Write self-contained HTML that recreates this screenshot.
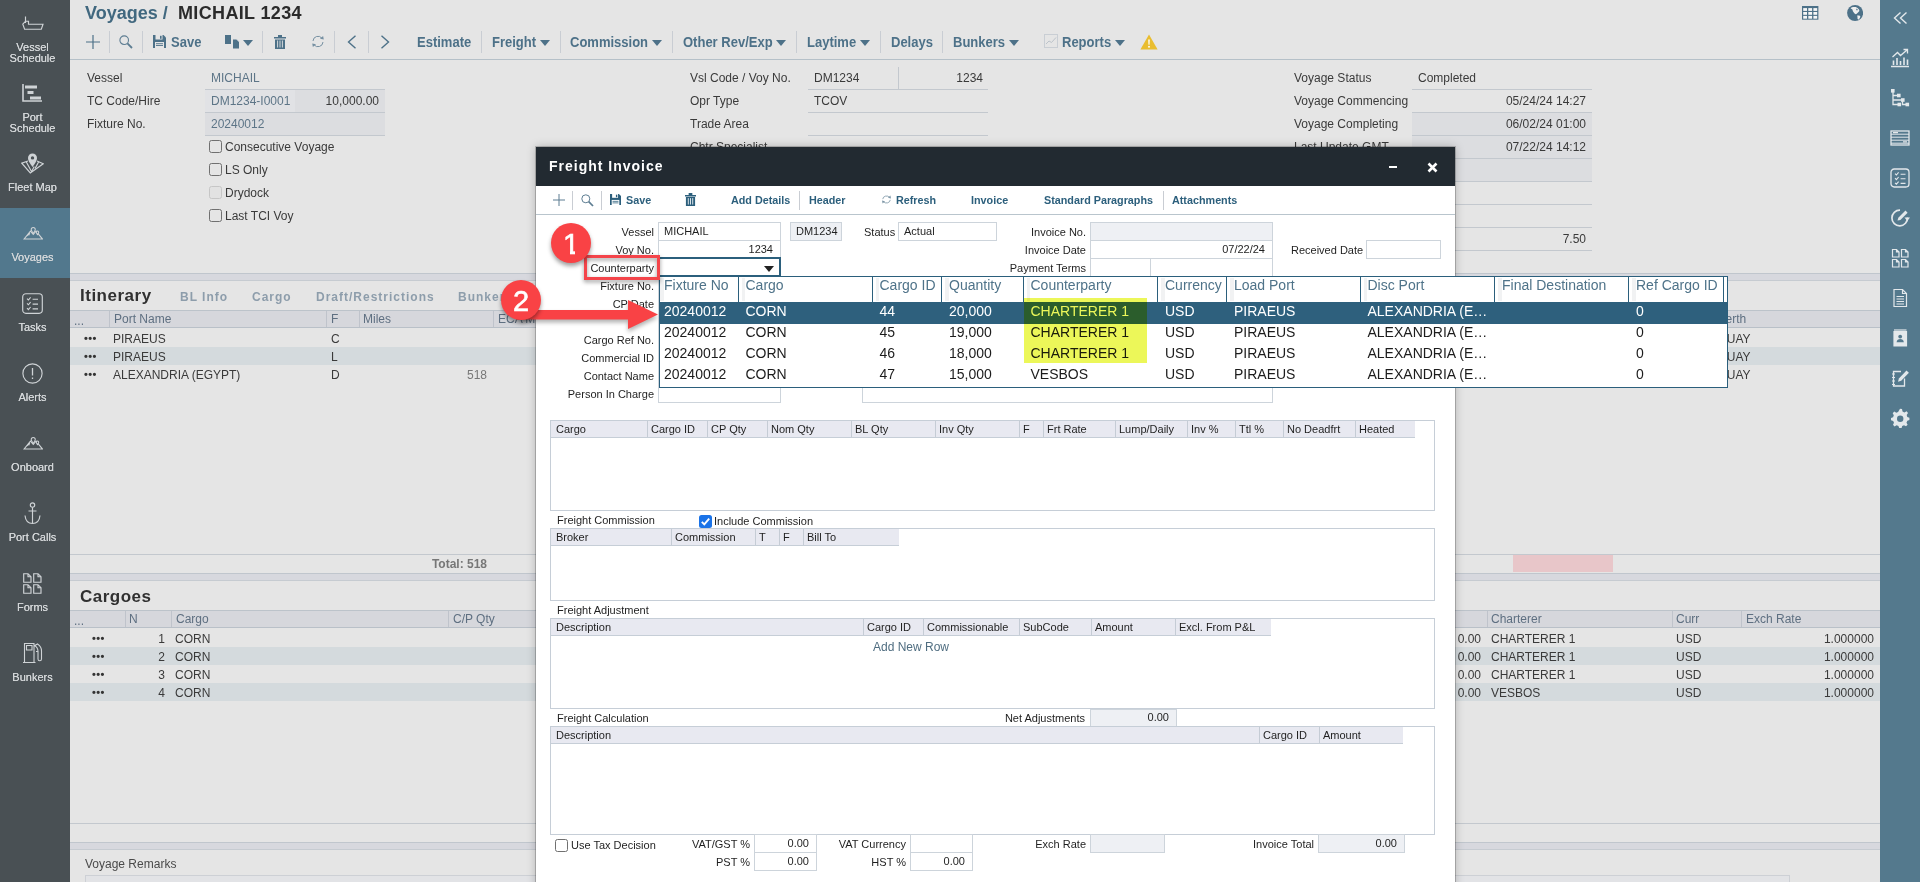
<!DOCTYPE html>
<html lang="en">
<head>
<meta charset="utf-8">
<title>Voyages / MICHAIL 1234</title>
<style>
*{box-sizing:border-box;margin:0;padding:0}
html,body{width:1920px;height:882px;overflow:hidden;background:#e5e5e5;font-family:"Liberation Sans",Arial,sans-serif;font-size:12px;color:#333}
.abs,.abs *{position:absolute}
#page{position:relative;width:1920px;height:882px;overflow:hidden;background:#e5e5e5}
.t{position:absolute;white-space:nowrap;line-height:1}
/* left nav */
#lnav{position:absolute;left:0;top:0;width:70px;height:882px;background:#495054}
#lnav .act{position:absolute;left:0;top:208px;width:70px;height:70px;background:#52788d}
#lnav .lb{position:absolute;left:0;width:65px;text-align:center;color:#d4d7d9;font-size:11px;line-height:11px;white-space:nowrap;text-shadow:0 0 0.5px #d4d7d9}
#lnav svg{position:absolute;fill:none;stroke:#cfd3d6;stroke-width:1.15}
/* right bar */
#rbar{position:absolute;left:1880px;top:0;width:40px;height:882px;background:#54798d}
#rbar svg{position:absolute;left:10px;width:20px;height:20px;fill:none;stroke:#e3e8eb;stroke-width:1.5}
/* header */
.ttl{font-size:18px;font-weight:bold}
.tb{font-size:14px;font-weight:bold;color:#4d7188;transform:scaleX(.9286);transform-origin:0 0}
.sep{position:absolute;width:1px;background:#c9cdd3}
.hl{position:absolute;height:1px;background:#c3c8ce}
.lab{font-size:12px;color:#3a3a3a}
.val{font-size:12px;color:#3a3a3a}
.fld{position:absolute;background:#dcdde0}
.cb{position:absolute;width:13px;height:13px;border:1px solid #707070;border-radius:2.5px;background:transparent}
.caret{position:absolute;width:0;height:0;border-left:5px solid transparent;border-right:5px solid transparent;border-top:6px solid #4d7188}
/* grids in bg */
.gh{position:absolute;background:#d6d7dc;border-top:1px solid #bcc3ca;border-bottom:1px solid #b9c0c8}
.gh .t{color:#5e6f81;font-size:12px;top:2px}
.gh .sep{top:0;height:16px;background:#bfc3cb}
.row2{position:absolute;background:#d4dadd}
.band{position:absolute;background:#d7d8de;border-top:1px solid #c0c6cd;border-bottom:1px solid #c6cbd1}
.sec{font-size:17px;font-weight:bold;letter-spacing:.5px;color:#303030}
.tab{font-size:13px;font-weight:bold;letter-spacing:1.08px;color:#8d9dab;transform:scaleX(.923);transform-origin:0 0}
.dots{font-size:11px;font-weight:bold;letter-spacing:.4px;color:#333}

/* dialog */
.dbox{position:absolute;left:536px;top:147px;width:919px;height:760px;background:#fff;box-shadow:0 0 0 1px rgba(0,0,0,.2),0 0 9px rgba(0,0,0,.25)}
.dtitle{position:absolute;left:536px;top:147px;width:919px;height:39px;background:#222a31}
.dtt{font-size:15px;font-weight:bold;letter-spacing:1.07px;color:#fff;transform:scaleX(.9333);transform-origin:0 0}
.dtb{font-size:11px;font-weight:bold;color:#2c5f7c;transform:scaleX(.98);transform-origin:0 0}
.dl{font-size:11px;color:#1f1f1f}
.df{position:absolute;border:1px solid #cdd4db;background:#fff}
.dg{position:absolute;border:1px solid #c6ced7;background:#fff}
.dgh{position:absolute;background:#e8e9f1;border-bottom:1px solid #c6ced7}
#dd{position:absolute;border:1px solid #2b5f7c;background:#fff}
.ddh{font-size:14px;color:#4f7389}
.ddr{font-size:14px;color:#1c1c1c}
.ddr.w{color:#fff}
.ddsel{position:absolute;background:#2e607d}
.ddsep{position:absolute;width:1px;height:25px;background:#2b5f7c}
.bdg i{position:absolute;top:26.6px;height:6px;background:#f94245}
.bdg{position:absolute;width:40px;height:40px;border-radius:50%;background:#f94245;color:#fff;font-size:29px;line-height:42px;text-align:center;-webkit-text-stroke:.6px #fff;box-shadow:0 3px 4px rgba(0,0,0,.38)}
</style>
</head>
<body>
<div id="page">

<!-- ================= MAIN BACKGROUND CONTENT ================= -->
<div id="main">
<!-- title -->
<div class="t ttl" style="left:85px;top:4px;color:#41687f">Voyages /</div>
<div class="t ttl" style="left:178px;top:4px;color:#2b2b2b;letter-spacing:.35px">MICHAIL 1234</div>
<!-- top right icons -->
<svg style="position:absolute;left:1802.3px;top:6px" width="16.4" height="13.7" viewBox="0 0 16.4 13.7"><rect width="16.4" height="13.7" fill="#4d7188"/><g fill="#f6f6f6"><rect x="1.2" y="2.1" width="3.8" height="2.8"/><rect x="1.2" y="6.0" width="3.8" height="2.8"/><rect x="1.2" y="9.9" width="3.8" height="2.8"/><rect x="6.3" y="2.1" width="3.8" height="2.8"/><rect x="6.3" y="6.0" width="3.8" height="2.8"/><rect x="6.3" y="9.9" width="3.8" height="2.8"/><rect x="11.4" y="2.1" width="3.8" height="2.8"/><rect x="11.4" y="6.0" width="3.8" height="2.8"/><rect x="11.4" y="9.9" width="3.8" height="2.8"/></g></svg>
<svg style="position:absolute;left:1847px;top:4.9px" width="16.2" height="16" viewBox="0 0 16.2 16"><circle cx="8.1" cy="8" r="8" fill="#4d7188"/><path d="M3.6 3.2L5.4 4.5L5.9 6.3L7.3 8.2L8.7 9.2L9.7 8.7L11 7.4L12.4 5.9L12 4.5L10.5 3L8.7 2L5.9 2L4 2.7Z M10.1 10.5L12.4 10.5L13.4 11.5L12.9 13L11.5 14.8L10.5 13.8L10.5 12Z" fill="#efefef"/><path d="M9.5 3.6L10.8 4.6L10.2 5.6L9.2 5Z" fill="#4d7188"/></svg>
<!-- toolbar -->
<svg style="position:absolute;left:86px;top:35px" width="14" height="14" viewBox="0 0 14 14"><path d="M7 0V14M0 7H14" stroke="#4d7188" stroke-width="1.2"/></svg>
<div class="sep" style="left:109px;top:31px;height:22px"></div>
<svg style="position:absolute;left:119px;top:35px" width="14" height="14" viewBox="0 0 14 14"><circle cx="5.2" cy="5.2" r="4.3" fill="none" stroke="#5d7d92" stroke-width="1.1"/><path d="M8.4 8.4L13 13" stroke="#5d7d92" stroke-width="1.8"/></svg>
<div class="sep" style="left:142px;top:31px;height:22px"></div>
<svg style="position:absolute;left:153px;top:35px" width="13" height="13" viewBox="0 0 13 13"><path d="M0 0H10.5L13 2.5V13H0Z" fill="#4d7188"/><rect x="2.5" y="0" width="7" height="4.5" fill="#e5e5e5"/><rect x="7" y=".8" width="1.6" height="3" fill="#4d7188"/><rect x="2" y="7" width="9" height="6" fill="#e5e5e5"/><path d="M3 8.7H10M3 10.5H10" stroke="#4d7188" stroke-width=".9"/></svg>
<div class="t tb" style="left:171px;top:35px">Save</div>
<svg style="position:absolute;left:225px;top:34px" width="15" height="15" viewBox="0 0 15 15"><path d="M0 1H6V10H0Z" fill="#4d7188"/><path d="M7.5 5H11.5L14.5 8V15H7.5Z" fill="#4d7188" stroke="#e5e5e5" stroke-width="1"/></svg>
<div class="caret" style="left:243px;top:40px"></div>
<div class="sep" style="left:262px;top:31px;height:22px"></div>
<svg style="position:absolute;left:274px;top:35px" width="12" height="14" viewBox="0 0 12 14"><path d="M0 2H12V3.6H0ZM4 0H8V2H4ZM1 4.4H11V14H1Z" fill="#4d7188"/><path d="M3.6 5.5V12.5M6 5.5V12.5M8.4 5.5V12.5" stroke="#e5e5e5" stroke-width=".9"/></svg>
<svg style="position:absolute;left:311px;top:35px" width="14" height="13" viewBox="0 0 14 13"><path d="M2 6A5 5 0 0 1 11 3.3M12 7A5 5 0 0 1 3 9.7" fill="none" stroke="#7690a2" stroke-width="1"/><path d="M9 3.8L12.8 4.6L12.1 .9ZM5 9.2L1.2 8.4L1.9 12.1Z" fill="#7690a2"/></svg>
<div class="sep" style="left:334px;top:31px;height:22px"></div>
<svg style="position:absolute;left:347px;top:35px" width="10" height="14" viewBox="0 0 10 14"><path d="M8.5 .8L1.5 7L8.5 13.2" fill="none" stroke="#4d7188" stroke-width="1.4"/></svg>
<div class="sep" style="left:368px;top:31px;height:22px"></div>
<svg style="position:absolute;left:380px;top:35px" width="10" height="14" viewBox="0 0 10 14"><path d="M1.5 .8L8.5 7L1.5 13.2" fill="none" stroke="#4d7188" stroke-width="1.4"/></svg>
<div class="t tb" style="left:417px;top:35px">Estimate</div>
<div class="sep" style="left:481px;top:31px;height:22px"></div>
<div class="t tb" style="left:492px;top:35px">Freight</div><div class="caret" style="left:540px;top:40px"></div>
<div class="sep" style="left:560px;top:31px;height:22px"></div>
<div class="t tb" style="left:570px;top:35px">Commission</div><div class="caret" style="left:652px;top:40px"></div>
<div class="sep" style="left:672px;top:31px;height:22px"></div>
<div class="t tb" style="left:683px;top:35px">Other Rev/Exp</div><div class="caret" style="left:776px;top:40px"></div>
<div class="sep" style="left:796px;top:31px;height:22px"></div>
<div class="t tb" style="left:807px;top:35px">Laytime</div><div class="caret" style="left:860px;top:40px"></div>
<div class="sep" style="left:880px;top:31px;height:22px"></div>
<div class="t tb" style="left:891px;top:35px">Delays</div>
<div class="sep" style="left:942px;top:31px;height:22px"></div>
<div class="t tb" style="left:953px;top:35px">Bunkers</div><div class="caret" style="left:1009px;top:40px"></div>
<svg style="position:absolute;left:1044px;top:34px" width="14" height="14" viewBox="0 0 14 14"><rect x=".5" y=".5" width="13" height="13" fill="none" stroke="#c9ced4"/><path d="M2 10L5 7L7.5 8.5L12 3.5" fill="none" stroke="#bcc3ca" stroke-width="1"/></svg>
<div class="t tb" style="left:1062px;top:35px">Reports</div><div class="caret" style="left:1115px;top:40px"></div>
<svg style="position:absolute;left:1140px;top:34px" width="18" height="16" viewBox="0 0 18 16"><path d="M9 .6L17.6 15.4H.4Z" fill="#e9bd2f"/><path d="M8.2 5.5H9.8L9.5 10.8H8.5Z" fill="#fff"/><circle cx="9" cy="12.8" r=".95" fill="#fff"/></svg>
<div class="hl" style="left:70px;top:59px;width:1810px;background:#b5c0c8"></div>

<!-- form col 1 -->
<div class="fld" style="left:205px;top:90px;width:90px;height:22px;background:#e1e2e5"></div>
<div class="fld" style="left:295px;top:90px;width:90px;height:22px"></div>
<div class="fld" style="left:205px;top:113px;width:180px;height:22px"></div>
<div class="hl" style="left:205px;top:89px;width:180px"></div>
<div class="hl" style="left:205px;top:112px;width:180px"></div>
<div class="hl" style="left:205px;top:135px;width:180px"></div>
<div class="t lab" style="left:87px;top:72px">Vessel</div>
<div class="t lab" style="left:87px;top:95px">TC Code/Hire</div>
<div class="t lab" style="left:87px;top:118px">Fixture No.</div>
<div class="t val" style="left:211px;top:72px;color:#5d7587">MICHAIL</div>
<div class="t val" style="left:211px;top:95px;color:#5d7587">DM1234-I0001</div>
<div class="t val" style="right:1541px;top:95px">10,000.00</div>
<div class="t val" style="left:211px;top:118px;color:#5d7587">20240012</div>
<div class="cb" style="left:209px;top:140px"></div><div class="t lab" style="left:225px;top:141px">Consecutive Voyage</div>
<div class="cb" style="left:209px;top:163px"></div><div class="t lab" style="left:225px;top:164px">LS Only</div>
<div class="cb" style="left:209px;top:186px;border-color:#c6c6c6;background:#e2e2e2"></div><div class="t lab" style="left:225px;top:187px">Drydock</div>
<div class="cb" style="left:209px;top:209px"></div><div class="t lab" style="left:225px;top:210px">Last TCI Voy</div>

<!-- form col 2 -->
<div class="t lab" style="left:690px;top:72px">Vsl Code / Voy No.</div>
<div class="t lab" style="left:690px;top:95px">Opr Type</div>
<div class="t lab" style="left:690px;top:118px">Trade Area</div>
<div class="t lab" style="left:690px;top:141px">Chtr Specialist</div>
<div class="t val" style="left:814px;top:72px">DM1234</div>
<div class="t val" style="right:937px;top:72px">1234</div>
<div class="t val" style="left:814px;top:95px">TCOV</div>
<div class="sep" style="left:898px;top:67px;height:22px;background:#c3c8ce"></div>
<div class="hl" style="left:808px;top:89px;width:180px"></div>
<div class="hl" style="left:808px;top:112px;width:180px"></div>
<div class="hl" style="left:808px;top:135px;width:180px"></div>

<!-- form col 3 -->
<div class="fld" style="left:1412px;top:113px;width:180px;height:68px"></div>
<div class="hl" style="left:1412px;top:89px;width:180px"></div>
<div class="hl" style="left:1412px;top:112px;width:180px"></div>
<div class="hl" style="left:1412px;top:135px;width:180px"></div>
<div class="hl" style="left:1412px;top:158px;width:180px"></div>
<div class="hl" style="left:1412px;top:181px;width:180px"></div>
<div class="hl" style="left:1412px;top:204px;width:180px"></div>
<div class="hl" style="left:1412px;top:227px;width:180px"></div>
<div class="hl" style="left:1412px;top:250px;width:180px"></div>
<div class="t lab" style="left:1294px;top:72px">Voyage Status</div>
<div class="t lab" style="left:1294px;top:95px">Voyage Commencing</div>
<div class="t lab" style="left:1294px;top:118px">Voyage Completing</div>
<div class="t lab" style="left:1294px;top:141px">Last Update GMT</div>
<div class="t val" style="left:1418px;top:72px">Completed</div>
<div class="t val" style="right:334px;top:95px">05/24/24 14:27</div>
<div class="t val" style="right:334px;top:118px">06/02/24 01:00</div>
<div class="t val" style="right:334px;top:141px">07/22/24 14:12</div>
<div class="t val" style="right:334px;top:233px">7.50</div>

<!-- itinerary -->
<div class="band" style="left:70px;top:273px;width:1810px;height:8px"></div>
<div class="t sec" style="left:80px;top:287px">Itinerary</div>
<div class="t tab" style="left:180px;top:290px">BL Info</div>
<div class="t tab" style="left:252px;top:290px">Cargo</div>
<div class="t tab" style="left:316px;top:290px">Draft/Restrictions</div>
<div class="t tab" style="left:458px;top:290px">Bunkers</div>
<div class="gh" style="left:70px;top:310px;width:1810px;height:18px">
 <div class="t" style="left:4px;top:4px">...</div>
 <div class="sep" style="left:39px"></div><div class="t" style="left:44px">Port Name</div>
 <div class="sep" style="left:256px"></div><div class="t" style="left:261px">F</div>
 <div class="sep" style="left:289px"></div><div class="t" style="left:293px">Miles</div>
 <div class="sep" style="left:423px"></div><div class="t" style="left:428px">ECA Miles</div>
 <div class="t" style="left:1647.5px">Berth</div>
</div>
<div class="row2" style="left:70px;top:347px;width:1810px;height:18px"></div>
<div class="t dots" style="left:84px;top:333px">•••</div><div class="t val" style="left:113px;top:333px">PIRAEUS</div><div class="t val" style="left:331px;top:333px">C</div>
<div class="t dots" style="left:84px;top:351px">•••</div><div class="t val" style="left:113px;top:351px">PIRAEUS</div><div class="t val" style="left:331px;top:351px">L</div>
<div class="t dots" style="left:84px;top:369px">•••</div><div class="t val" style="left:113px;top:369px">ALEXANDRIA (EGYPT)</div><div class="t val" style="left:331px;top:369px">D</div>
<div class="t val" style="right:1433px;top:369px;color:#777">518</div>
<div class="t val" style="left:1691.5px;top:333px">URUGUAY</div>
<div class="t val" style="left:1691.5px;top:351px">URUGUAY</div>
<div class="t val" style="left:1691.5px;top:369px">URUGUAY</div>
<div class="hl" style="left:70px;top:554px;width:1810px"></div>
<div class="t val" style="right:1433px;top:558px;color:#777;font-weight:bold">Total: 518</div>
<div style="position:absolute;left:1513px;top:555px;width:100px;height:17px;background:#e8c6c9"></div>

<!-- cargoes -->
<div class="band" style="left:70px;top:573px;width:1810px;height:8px"></div>
<div class="t sec" style="left:80px;top:588px">Cargoes</div>
<div class="gh" style="left:70px;top:610px;width:1810px;height:18px">
 <div class="t" style="left:4px;top:4px">...</div>
 <div class="sep" style="left:55px"></div><div class="t" style="left:59px">N</div>
 <div class="sep" style="left:101px"></div><div class="t" style="left:106px">Cargo</div>
 <div class="sep" style="left:378px"></div><div class="t" style="left:383px">C/P Qty</div>
 <div class="sep" style="left:1417px"></div><div class="t" style="left:1421px">Charterer</div>
 <div class="sep" style="left:1602px"></div><div class="t" style="left:1606px">Curr</div>
 <div class="sep" style="left:1671px"></div><div class="t" style="left:1676px">Exch Rate</div>
</div>
<div class="row2" style="left:70px;top:647px;width:1810px;height:18px"></div>
<div class="row2" style="left:70px;top:683px;width:1810px;height:18px"></div>
<div class="t dots" style="left:92px;top:633px">•••</div><div class="t val" style="right:1755px;top:633px">1</div><div class="t val" style="left:175px;top:633px">CORN</div><div class="t val" style="right:439px;top:633px">0.00</div><div class="t val" style="left:1491px;top:633px">CHARTERER 1</div><div class="t val" style="left:1676px;top:633px">USD</div><div class="t val" style="right:46px;top:633px">1.000000</div>
<div class="t dots" style="left:92px;top:651px">•••</div><div class="t val" style="right:1755px;top:651px">2</div><div class="t val" style="left:175px;top:651px">CORN</div><div class="t val" style="right:439px;top:651px">0.00</div><div class="t val" style="left:1491px;top:651px">CHARTERER 1</div><div class="t val" style="left:1676px;top:651px">USD</div><div class="t val" style="right:46px;top:651px">1.000000</div>
<div class="t dots" style="left:92px;top:669px">•••</div><div class="t val" style="right:1755px;top:669px">3</div><div class="t val" style="left:175px;top:669px">CORN</div><div class="t val" style="right:439px;top:669px">0.00</div><div class="t val" style="left:1491px;top:669px">CHARTERER 1</div><div class="t val" style="left:1676px;top:669px">USD</div><div class="t val" style="right:46px;top:669px">1.000000</div>
<div class="t dots" style="left:92px;top:687px">•••</div><div class="t val" style="right:1755px;top:687px">4</div><div class="t val" style="left:175px;top:687px">CORN</div><div class="t val" style="right:439px;top:687px">0.00</div><div class="t val" style="left:1491px;top:687px">VESBOS</div><div class="t val" style="left:1676px;top:687px">USD</div><div class="t val" style="right:46px;top:687px">1.000000</div>
<div class="hl" style="left:70px;top:823px;width:1810px"></div>
<div class="band" style="left:70px;top:842px;width:1810px;height:8px"></div>
<div class="t lab" style="left:85px;top:858px;color:#4a4a4a">Voyage Remarks</div>
<div style="position:absolute;left:85px;top:875px;width:1705px;height:12px;border:1px solid #cdd0d5;background:#e2e3e6"></div>

</div>

<!-- ================= LEFT NAV ================= -->
<div id="lnav">
<div class="act"></div>
<svg style="left:22px;top:16px" width="22" height="14" viewBox="0 0 22 14"><path d="M3.5 .5V7M.8 8.2L3.5 5.2H6.5V8.2H21L19.3 13.2H2.6Z"/></svg>
<div class="lb" style="top:42px">Vessel</div><div class="lb" style="top:53px">Schedule</div>
<svg style="left:22px;top:84px" width="21" height="18" viewBox="0 0 21 18"><path d="M1 0V17H20" stroke-width="1.6"/><path d="M3 3H15M5.5 8.5H11.5M8 14H19" stroke-width="3.2" stroke="#cfd3d6"/></svg>
<div class="lb" style="top:112px">Port</div><div class="lb" style="top:123px">Schedule</div>
<svg style="left:21px;top:153px" width="23" height="21" viewBox="0 0 23 21"><path d="M7 8L.8 10.2L9.3 20L22.2 10.8L16 8" /><path d="M5.2 8.8L10.6 18.8M10.6 18.8L13.2 13.6M14 15.6L17.6 9"/><path d="M11.5 14C8.6 10 7 7.6 7 5A4.5 4.5 0 0 1 16 5C16 7.6 14.4 10 11.5 14Z" fill="#cfd3d6" stroke="none"/><circle cx="11.5" cy="4.9" r="1.7" fill="#495054" stroke="none"/></svg>
<div class="lb" style="top:182px">Fleet Map</div>
<svg style="left:22.5px;top:226.6px" width="20.5" height="13" viewBox="0 0 22 14"><path d="M1 13H21L14 4.5L11 8L8 4.5Z M6 7.2L4.4 9.5M7.2 6.3L6.2 9"/><path d="M11 6.8C9.6 4.8 8.8 3.9 8.8 2.8A2.2 2.2 0 0 1 13.2 2.8C13.2 3.9 12.4 4.8 11 6.8Z M15.6 8.2C14.8 7 14.3 6.4 14.3 5.7A1.3 1.3 0 0 1 16.9 5.7C16.9 6.4 16.4 7 15.6 8.2Z" fill="#52788d" stroke-width="1.1"/></svg>
<div class="lb" style="top:252px">Voyages</div>
<svg style="left:22px;top:293px" width="21" height="21" viewBox="0 0 21 21"><rect x=".7" y=".7" width="19.6" height="19.6" rx="3.2"/><path d="M5 5.6L6.4 7L8.6 4.4M5 10.4L6.4 11.8L8.6 9.2M5 15.2L6.4 16.6L8.6 14M10.6 6.3H16M10.6 11.1H16M10.6 15.9H16" stroke-width="1.1"/></svg>
<div class="lb" style="top:322px">Tasks</div>
<svg style="left:22px;top:363px" width="21" height="21" viewBox="0 0 21 21"><circle cx="10.5" cy="10.5" r="9.6"/><path d="M10.5 5V12.6M10.5 14.4V16" stroke-width="1.3"/></svg>
<div class="lb" style="top:392px">Alerts</div>
<svg style="left:22.5px;top:436.6px" width="20.5" height="13" viewBox="0 0 22 14"><path d="M1 13H21L14 4.5L11 8L8 4.5Z M6 7.2L4.4 9.5M7.2 6.3L6.2 9"/><path d="M11 6.8C9.6 4.8 8.8 3.9 8.8 2.8A2.2 2.2 0 0 1 13.2 2.8C13.2 3.9 12.4 4.8 11 6.8Z M15.6 8.2C14.8 7 14.3 6.4 14.3 5.7A1.3 1.3 0 0 1 16.9 5.7C16.9 6.4 16.4 7 15.6 8.2Z" fill="#495054" stroke-width="1.1"/></svg>
<div class="lb" style="top:462px">Onboard</div>
<svg style="left:24px;top:502px" width="17" height="23" viewBox="0 0 17 23"><circle cx="8.5" cy="3" r="2.2"/><path d="M8.5 5.2V21.5M4.5 9H12.5M1 13.5C1.5 18.5 4.5 21.5 8.5 21.5C12.5 21.5 15.5 18.5 16 13.5"/></svg>
<div class="lb" style="top:532px">Port Calls</div>
<svg style="left:23px;top:573px" width="19" height="21" viewBox="0 0 19 21"><path d="M.7 .7H5L8 3.7V9.2H.7ZM5 .7V3.7H8M10.7 .7H15L18 3.7V9.2H10.7ZM15 .7V3.7H18M.7 11.7H5L8 14.7V20.2H.7ZM5 11.7V14.7H8M10.7 11.7H15L18 14.7V20.2H10.7ZM15 11.7V14.7H18"/></svg>
<div class="lb" style="top:602px">Forms</div>
<svg style="left:22px;top:642px" width="21" height="22" viewBox="0 0 21 22"><path d="M2.5 20V1.5H12V20M1 20.5H13.5M4.5 3.5H10V8H4.5ZM12 4L15.5 2C18 3.5 19.5 6 19.5 9V17A1.7 1.7 0 0 1 16 17V9.5H14M12.5 3.5C15 5 16 7 16 9.5" stroke-width="1.1"/></svg>
<div class="lb" style="top:672px">Bunkers</div>

</div>

<!-- ================= RIGHT BAR ================= -->
<div id="rbar">
<svg style="top:8px" viewBox="0 0 20 20"><path d="M10.5 4.5L4.5 10L10.5 15.5M16.5 4.5L10.5 10L16.5 15.5" stroke-width="1.4"/></svg>
<svg style="top:48px" viewBox="0 0 20 20"><path d="M1 18.5H19M3.5 17V12.5M7 17V10M10.5 17V13M14 17V9.5M17.5 17V11.5" stroke-width="1.6"/><path d="M2.5 9L7.5 4.5L10.5 7.5L17 2M13.5 1.5H17.5V5.5" stroke-width="1.3"/></svg>
<svg style="top:88px" viewBox="0 0 20 20"><path d="M3 3V16.5H9M3 7.5H8M3 12H12.5V16.5H16.5" stroke-width="1.3"/><rect x="1" y="1" width="3.6" height="3.6" fill="#e3e8eb" stroke="none"/><rect x="7" y="5.7" width="3.6" height="3.6" fill="#e3e8eb" stroke="none"/><rect x="11" y="10.2" width="3.6" height="3.6" fill="#e3e8eb" stroke="none"/><rect x="7.5" y="14.7" width="3.6" height="3.6" fill="#e3e8eb" stroke="none"/><rect x="15.5" y="14.7" width="3.6" height="3.6" fill="#e3e8eb" stroke="none"/></svg>
<svg style="top:128px" viewBox="0 0 20 20"><rect x="1" y="3" width="18" height="14" stroke-width="1.3"/><path d="M1 6.2H19M1 9.2H19M1 12.2H19M1 15.2H19" stroke-width="1"/><path d="M3 4.7H8M13 13.8H17" stroke-width="1.2"/></svg>
<svg style="top:168px" viewBox="0 0 20 20"><rect x="1" y="1" width="18" height="18" rx="3.2" stroke-width="1.3"/><path d="M5 5.6L6.4 7L8.6 4.4M5 10.2L6.4 11.6L8.6 9M5 14.8L6.4 16.2L8.6 13.6M10.6 6.2H15.5M10.6 10.8H15.5M10.6 15.4H15.5" stroke-width="1.1"/></svg>
<svg style="top:208px" viewBox="0 0 20 20"><path d="M17.5 9.5A7.8 7.8 0 1 1 10 2.2" stroke-width="1.7"/><path d="M14.5 9.5H20L17.3 13Z" fill="#e3e8eb" stroke="none"/><path d="M7.5 12.5L8.3 9.8L15.5 2.6L17.6 4.7L10.4 11.9Z" fill="#e3e8eb" stroke="none"/></svg>
<svg style="top:248px" viewBox="0 0 20 20"><path d="M2.5 1.5H6.5L9 4V9H2.5ZM6.5 1.5V4H9M11.5 1.5H15.5L18 4V9H11.5ZM15.5 1.5V4H18M2.5 11.5H6.5L9 14V19H2.5ZM6.5 11.5V14H9M11.5 11.5H15.5L18 14V19H11.5ZM15.5 11.5V14H18" stroke-width="1.2"/></svg>
<svg style="top:288px" viewBox="0 0 20 20"><path d="M4 1.5H12.5L16.5 5.5V18.5H4ZM12.5 1.5V5.5H16.5" stroke-width="1.2"/><path d="M6.5 8.5H14M6.5 11H14M6.5 13.5H14M6.5 16H14" stroke-width="1"/></svg>
<svg style="top:328px" viewBox="0 0 20 20"><path d="M4 3.5H16.5V18H4Z" fill="#e3e8eb" stroke-width="1.2"/><path d="M4 2H16.5" stroke-width="1.2"/><circle cx="10.2" cy="8.6" r="1.9" fill="#54798d" stroke="none"/><path d="M6.6 14.2C6.8 11.8 8.3 11 10.2 11S13.6 11.8 13.8 14.2Z" fill="#54798d" stroke="none"/></svg>
<svg style="top:368px" viewBox="0 0 20 20"><path d="M14.5 10.5V18H3.5V3.5H11" stroke-width="1.3"/><path d="M2 6H5M2 9.5H5M2 13H5M2 16.5H5" stroke-width="1.1"/><path d="M8 13.8L8.9 10.5L16.5 2.5L18.9 4.8L11.2 12.8Z" fill="#e3e8eb" stroke="none"/></svg>
<svg style="top:408px" viewBox="0 0 20 20"><path d="M10 .8L12 1 12.5 3.4 14.4 4.4 16.6 3.3 18 5 16.7 7 17.3 9 19.4 9.8V12L17.3 12.8 16.5 14.7 17.6 16.8 16 18.3 14 17.2 12.2 18 11.6 20H9.2L8.4 18 6.6 17.3 4.5 18.4 3 16.8 4 14.8 3.2 13 1 12.3V10L3.1 9.2 3.8 7.3 2.7 5.2 4.2 3.6 6.3 4.7 8.1 3.9Z" fill="#e3e8eb" stroke="none"/><circle cx="10.2" cy="10.8" r="3.2" fill="#54798d" stroke="none"/></svg>

</div>

<!-- ================= DIALOG ================= -->
<!--DLG_START--><div id="dlg">
<div class="dbox"></div>
<div class="dtitle"></div>
<div class="t dtt" style="left:549px;top:158px;">Freight Invoice</div>
<div style="position:absolute;left:1389px;top:166px;width:8px;height:2px;background:#fff"></div>
<svg style="position:absolute;left:1427px;top:162px" width="11" height="11" viewBox="0 0 11 11"><path d="M1.5 1.5L9.5 9.5M9.5 1.5L1.5 9.5" stroke="#fff" stroke-width="2.6" fill="none"/></svg>
<div class="hl" style="left:536px;top:214px;width:919px;background:#b9c5cd"></div>
<svg style="position:absolute;left:553px;top:194px" width="12" height="12" viewBox="0 0 12 12"><path d="M6 0V12M0 6H12" stroke="#5d7d92" stroke-width="1"/></svg>
<div class="sep" style="left:572px;top:191px;height:19px"></div>
<svg style="position:absolute;left:581px;top:194px" width="13" height="13" viewBox="0 0 13 13"><circle cx="4.8" cy="4.8" r="4" fill="none" stroke="#5d7d92" stroke-width="1"/><path d="M7.7 7.7L12 12" stroke="#5d7d92" stroke-width="1.7"/></svg>
<div class="sep" style="left:601px;top:191px;height:19px"></div>
<svg style="position:absolute;left:610px;top:194px" width="11" height="11" viewBox="0 0 13 13"><path d="M0 0H10.5L13 2.5V13H0Z" fill="#2c5f7c"/><rect x="2.5" y="0" width="7" height="4.5" fill="#fff"/><rect x="7" y=".8" width="1.6" height="3" fill="#2c5f7c"/><rect x="2" y="7" width="9" height="6" fill="#fff"/><path d="M3 8.7H10M3 10.5H10" stroke="#2c5f7c" stroke-width=".9"/></svg>
<div class="t dtb" style="left:626px;top:195px;">Save</div>
<svg style="position:absolute;left:685px;top:193px" width="11" height="13" viewBox="0 0 12 14"><path d="M0 2H12V3.6H0ZM4 0H8V2H4ZM1 4.4H11V14H1Z" fill="#2c5f7c"/><path d="M3.6 5.5V12.5M6 5.5V12.5M8.4 5.5V12.5" stroke="#fff" stroke-width=".9"/></svg>
<div class="t dtb" style="left:731px;top:195px;">Add Details</div>
<div class="sep" style="left:799px;top:191px;height:19px"></div>
<div class="t dtb" style="left:809px;top:195px;">Header</div>
<svg style="position:absolute;left:880.5px;top:195px" width="11" height="9" viewBox="0 0 14 12"><path d="M2 5.5A5 4.6 0 0 1 11 3.2M12 6.5A5 4.6 0 0 1 3 8.8" fill="none" stroke="#7d96a6" stroke-width="1.1"/><path d="M9 3.8L13 4.6L12.2 .8ZM5 8.2L1 7.4L1.8 11.2Z" fill="#7d96a6"/></svg>
<div class="t dtb" style="left:896px;top:195px;">Refresh</div>
<div class="t dtb" style="left:971px;top:195px;">Invoice</div>
<div class="t dtb" style="left:1044px;top:195px;">Standard Paragraphs</div>
<div class="sep" style="left:1163px;top:191px;height:19px"></div>
<div class="t dtb" style="left:1172px;top:195px;">Attachments</div>
<div class="t dl" style="right:1266px;top:227px;">Vessel</div>
<div class="t dl" style="right:1266px;top:245px;">Voy No.</div>
<div class="t dl" style="right:1266px;top:281px;">Fixture No.</div>
<div class="t dl" style="right:1266px;top:299px;">CP Date</div>
<div class="t dl" style="right:1266px;top:335px;">Cargo Ref No.</div>
<div class="t dl" style="right:1266px;top:353px;">Commercial ID</div>
<div class="t dl" style="right:1266px;top:371px;">Contact Name</div>
<div class="t dl" style="right:1266px;top:389px;">Person In Charge</div>
<div class="df" style="left:658px;top:222px;width:123px;height:19px;"></div>
<div class="t dl" style="left:664px;top:226px;">MICHAIL</div>
<div class="df" style="left:658px;top:240px;width:123px;height:19px;"></div>
<div class="t dl" style="right:1147px;top:244px;">1234</div>
<div class="df" style="left:658px;top:258px;width:123px;height:19px;"></div>
<div class="df" style="left:658px;top:276px;width:123px;height:19px;"></div>
<div class="df" style="left:658px;top:294px;width:123px;height:19px;"></div>
<div class="df" style="left:658px;top:312px;width:123px;height:19px;"></div>
<div class="df" style="left:658px;top:330px;width:123px;height:19px;"></div>
<div class="df" style="left:658px;top:348px;width:123px;height:19px;"></div>
<div class="df" style="left:658px;top:366px;width:123px;height:19px;"></div>
<div class="df" style="left:658px;top:384px;width:123px;height:19px;"></div>
<div class="df" style="left:790px;top:222px;width:52px;height:19px;background:#eef0f4"></div>
<div class="t dl" style="left:796px;top:226px;">DM1234</div>
<div class="t dl" style="left:864px;top:227px;">Status</div>
<div class="df" style="left:898px;top:222px;width:99px;height:19px;"></div>
<div class="t dl" style="left:904px;top:226px;">Actual</div>
<div class="df" style="left:862px;top:366px;width:411px;height:37px;"></div>
<div class="t dl" style="right:834px;top:227px;">Invoice No.</div>
<div class="df" style="left:1090px;top:222px;width:183px;height:19px;background:#eef0f4"></div>
<div class="t dl" style="right:834px;top:245px;">Invoice Date</div>
<div class="df" style="left:1090px;top:240px;width:183px;height:19px;"></div>
<div class="t dl" style="right:655px;top:244px;">07/22/24</div>
<div class="t dl" style="right:834px;top:263px;">Payment Terms</div>
<div class="df" style="left:1090px;top:258px;width:61px;height:19px;"></div>
<div class="df" style="left:1150px;top:258px;width:123px;height:19px;"></div>
<div class="t dl" style="left:1291px;top:245px;">Received Date</div>
<div class="df" style="left:1366px;top:240px;width:75px;height:19px;"></div>
<div class="dg" style="left:550px;top:420px;width:885px;height:91px"></div>
<div class="dgh" style="left:551px;top:421px;width:864px;height:17px"></div>
<div class="t dl" style="left:556px;top:424px;">Cargo</div>
<div class="sep" style="left:647px;top:421px;height:16px;background:#c5ccd5"></div>
<div class="t dl" style="left:651px;top:424px;">Cargo ID</div>
<div class="sep" style="left:707px;top:421px;height:16px;background:#c5ccd5"></div>
<div class="t dl" style="left:711px;top:424px;">CP Qty</div>
<div class="sep" style="left:767px;top:421px;height:16px;background:#c5ccd5"></div>
<div class="t dl" style="left:771px;top:424px;">Nom Qty</div>
<div class="sep" style="left:851px;top:421px;height:16px;background:#c5ccd5"></div>
<div class="t dl" style="left:855px;top:424px;">BL Qty</div>
<div class="sep" style="left:935px;top:421px;height:16px;background:#c5ccd5"></div>
<div class="t dl" style="left:939px;top:424px;">Inv Qty</div>
<div class="sep" style="left:1019px;top:421px;height:16px;background:#c5ccd5"></div>
<div class="t dl" style="left:1023px;top:424px;">F</div>
<div class="sep" style="left:1043px;top:421px;height:16px;background:#c5ccd5"></div>
<div class="t dl" style="left:1047px;top:424px;">Frt Rate</div>
<div class="sep" style="left:1115px;top:421px;height:16px;background:#c5ccd5"></div>
<div class="t dl" style="left:1119px;top:424px;">Lump/Daily</div>
<div class="sep" style="left:1187px;top:421px;height:16px;background:#c5ccd5"></div>
<div class="t dl" style="left:1191px;top:424px;">Inv %</div>
<div class="sep" style="left:1235px;top:421px;height:16px;background:#c5ccd5"></div>
<div class="t dl" style="left:1239px;top:424px;">Ttl %</div>
<div class="sep" style="left:1283px;top:421px;height:16px;background:#c5ccd5"></div>
<div class="t dl" style="left:1287px;top:424px;">No Deadfrt</div>
<div class="sep" style="left:1355px;top:421px;height:16px;background:#c5ccd5"></div>
<div class="t dl" style="left:1359px;top:424px;">Heated</div>
<div class="t dl" style="left:557px;top:515px;">Freight Commission</div>
<div style="position:absolute;left:699px;top:515px;width:13px;height:13px;border-radius:2.5px;background:#1a73e8"></div><svg style="position:absolute;left:699px;top:515px" width="13" height="13" viewBox="0 0 13 13"><path d="M2.8 6.8L5.3 9.3L10.2 3.6" fill="none" stroke="#fff" stroke-width="1.9"/></svg>
<div class="t dl" style="left:714px;top:516px;">Include Commission</div>
<div class="dg" style="left:550px;top:528px;width:885px;height:73px"></div>
<div class="dgh" style="left:551px;top:529px;width:348px;height:17px"></div>
<div class="t dl" style="left:556px;top:532px;">Broker</div>
<div class="sep" style="left:671px;top:529px;height:16px;background:#c5ccd5"></div>
<div class="t dl" style="left:675px;top:532px;">Commission</div>
<div class="sep" style="left:755px;top:529px;height:16px;background:#c5ccd5"></div>
<div class="t dl" style="left:759px;top:532px;">T</div>
<div class="sep" style="left:779px;top:529px;height:16px;background:#c5ccd5"></div>
<div class="t dl" style="left:783px;top:532px;">F</div>
<div class="sep" style="left:803px;top:529px;height:16px;background:#c5ccd5"></div>
<div class="t dl" style="left:807px;top:532px;">Bill To</div>
<div class="t dl" style="left:557px;top:605px;">Freight Adjustment</div>
<div class="dg" style="left:550px;top:618px;width:885px;height:91px"></div>
<div class="dgh" style="left:551px;top:619px;width:720px;height:17px"></div>
<div class="t dl" style="left:556px;top:622px;">Description</div>
<div class="sep" style="left:863px;top:619px;height:16px;background:#c5ccd5"></div>
<div class="t dl" style="left:867px;top:622px;">Cargo ID</div>
<div class="sep" style="left:923px;top:619px;height:16px;background:#c5ccd5"></div>
<div class="t dl" style="left:927px;top:622px;">Commissionable</div>
<div class="sep" style="left:1019px;top:619px;height:16px;background:#c5ccd5"></div>
<div class="t dl" style="left:1023px;top:622px;">SubCode</div>
<div class="sep" style="left:1091px;top:619px;height:16px;background:#c5ccd5"></div>
<div class="t dl" style="left:1095px;top:622px;">Amount</div>
<div class="sep" style="left:1175px;top:619px;height:16px;background:#c5ccd5"></div>
<div class="t dl" style="left:1179px;top:622px;">Excl. From P&L</div>
<div class="t dl" style="left:873px;top:641px;font-size:12px;color:#4f6d80">Add New Row</div>
<div class="t dl" style="left:557px;top:713px;">Freight Calculation</div>
<div class="t dl" style="right:835px;top:713px;">Net Adjustments</div>
<div class="df" style="left:1090px;top:709px;width:87px;height:18px;background:#eef0f4;border-bottom:none"></div>
<div class="t dl" style="right:751px;top:712px;">0.00</div>
<div class="dg" style="left:550px;top:726px;width:885px;height:109px"></div>
<div class="dgh" style="left:551px;top:727px;width:852px;height:17px"></div>
<div class="t dl" style="left:556px;top:730px;">Description</div>
<div class="sep" style="left:1259px;top:727px;height:16px;background:#c5ccd5"></div>
<div class="t dl" style="left:1263px;top:730px;">Cargo ID</div>
<div class="sep" style="left:1319px;top:727px;height:16px;background:#c5ccd5"></div>
<div class="t dl" style="left:1323px;top:730px;">Amount</div>
<div class="cb" style="left:555px;top:839px"></div>
<div class="t dl" style="left:571px;top:840px;">Use Tax Decision</div>
<div class="t dl" style="right:1170px;top:839px;">VAT/GST %</div>
<div class="df" style="left:754px;top:834px;width:63px;height:19px;"></div>
<div class="t dl" style="right:1111px;top:838px;">0.00</div>
<div class="t dl" style="right:1170px;top:857px;">PST %</div>
<div class="df" style="left:754px;top:852px;width:63px;height:19px;"></div>
<div class="t dl" style="right:1111px;top:856px;">0.00</div>
<div class="t dl" style="right:1014px;top:839px;">VAT Currency</div>
<div class="df" style="left:910px;top:834px;width:63px;height:19px;"></div>
<div class="t dl" style="right:1014px;top:857px;">HST %</div>
<div class="df" style="left:910px;top:852px;width:63px;height:19px;"></div>
<div class="t dl" style="right:955px;top:856px;">0.00</div>
<div class="t dl" style="right:834px;top:839px;">Exch Rate</div>
<div class="df" style="left:1090px;top:834px;width:75px;height:19px;background:#eef0f4"></div>
<div class="t dl" style="right:606px;top:839px;">Invoice Total</div>
<div class="df" style="left:1318px;top:834px;width:87px;height:19px;background:#eef0f4"></div>
<div class="t dl" style="right:523px;top:838px;">0.00</div>
</div><!--DLG_END-->

<!-- ================= DROPDOWN + ANNOTATIONS ================= -->
<!--OVL_START--><div id="ovl">
<div style="position:absolute;left:658px;top:257px;width:123px;height:20px;border:2px solid #2b5f7c;background:#fff"></div>
<div style="position:absolute;left:764px;top:266px;width:0;height:0;border-left:5.5px solid transparent;border-right:5.5px solid transparent;border-top:6px solid #222"></div>
<div id="dd" style="left:659px;top:276px;width:1069px;height:112px">
</div>
<div class="ddsel" style="left:660px;top:302px;width:1067px;height:22px"></div>
<div style="position:absolute;left:660.4px;top:278px;width:3.4px;height:23px;background:#f1f2f3"></div>
<div class="t ddh" style="left:664px;top:278px">Fixture No</div>
<div class="ddsep" style="left:738px;top:277px"></div>
<div style="position:absolute;left:741.9px;top:278px;width:3.4px;height:23px;background:#f1f2f3"></div>
<div class="t ddh" style="left:745.5px;top:278px">Cargo</div>
<div class="ddsep" style="left:872px;top:277px"></div>
<div style="position:absolute;left:875.9px;top:278px;width:3.4px;height:23px;background:#f1f2f3"></div>
<div class="t ddh" style="left:879.5px;top:278px">Cargo ID</div>
<div class="ddsep" style="left:941px;top:277px"></div>
<div style="position:absolute;left:945.4px;top:278px;width:3.4px;height:23px;background:#f1f2f3"></div>
<div class="t ddh" style="left:949px;top:278px">Quantity</div>
<div class="ddsep" style="left:1023px;top:277px"></div>
<div style="position:absolute;left:1026.9px;top:278px;width:3.4px;height:23px;background:#f1f2f3"></div>
<div class="t ddh" style="left:1030.5px;top:278px">Counterparty</div>
<div class="ddsep" style="left:1157px;top:277px"></div>
<div style="position:absolute;left:1161.4px;top:278px;width:3.4px;height:23px;background:#f1f2f3"></div>
<div class="t ddh" style="left:1165px;top:278px">Currency</div>
<div class="ddsep" style="left:1226px;top:277px"></div>
<div style="position:absolute;left:1230.4px;top:278px;width:3.4px;height:23px;background:#f1f2f3"></div>
<div class="t ddh" style="left:1234px;top:278px">Load Port</div>
<div class="ddsep" style="left:1360px;top:277px"></div>
<div style="position:absolute;left:1363.9px;top:278px;width:3.4px;height:23px;background:#f1f2f3"></div>
<div class="t ddh" style="left:1367.5px;top:278px">Disc Port</div>
<div class="ddsep" style="left:1494px;top:277px"></div>
<div style="position:absolute;left:1498.4px;top:278px;width:3.4px;height:23px;background:#f1f2f3"></div>
<div class="t ddh" style="left:1502px;top:278px">Final Destination</div>
<div class="ddsep" style="left:1628px;top:277px"></div>
<div style="position:absolute;left:1632.4px;top:278px;width:3.4px;height:23px;background:#f1f2f3"></div>
<div class="t ddh" style="left:1636px;top:278px">Ref Cargo ID</div>
<div class="ddsep" style="left:1723px;top:277px"></div>
<div class="t ddr w" style="left:664px;top:304px">20240012</div>
<div class="t ddr w" style="left:745.5px;top:304px">CORN</div>
<div class="t ddr w" style="left:879.5px;top:304px">44</div>
<div class="t ddr w" style="left:949px;top:304px">20,000</div>
<div class="t ddr w" style="left:1030.5px;top:304px">CHARTERER 1</div>
<div class="t ddr w" style="left:1165px;top:304px">USD</div>
<div class="t ddr w" style="left:1234px;top:304px">PIRAEUS</div>
<div class="t ddr w" style="left:1367.5px;top:304px">ALEXANDRIA (E…</div>
<div class="t ddr w" style="left:1636px;top:304px">0</div>
<div class="t ddr" style="left:664px;top:325px">20240012</div>
<div class="t ddr" style="left:745.5px;top:325px">CORN</div>
<div class="t ddr" style="left:879.5px;top:325px">45</div>
<div class="t ddr" style="left:949px;top:325px">19,000</div>
<div class="t ddr" style="left:1030.5px;top:325px">CHARTERER 1</div>
<div class="t ddr" style="left:1165px;top:325px">USD</div>
<div class="t ddr" style="left:1234px;top:325px">PIRAEUS</div>
<div class="t ddr" style="left:1367.5px;top:325px">ALEXANDRIA (E…</div>
<div class="t ddr" style="left:1636px;top:325px">0</div>
<div class="t ddr" style="left:664px;top:346px">20240012</div>
<div class="t ddr" style="left:745.5px;top:346px">CORN</div>
<div class="t ddr" style="left:879.5px;top:346px">46</div>
<div class="t ddr" style="left:949px;top:346px">18,000</div>
<div class="t ddr" style="left:1030.5px;top:346px">CHARTERER 1</div>
<div class="t ddr" style="left:1165px;top:346px">USD</div>
<div class="t ddr" style="left:1234px;top:346px">PIRAEUS</div>
<div class="t ddr" style="left:1367.5px;top:346px">ALEXANDRIA (E…</div>
<div class="t ddr" style="left:1636px;top:346px">0</div>
<div class="t ddr" style="left:664px;top:367px">20240012</div>
<div class="t ddr" style="left:745.5px;top:367px">CORN</div>
<div class="t ddr" style="left:879.5px;top:367px">47</div>
<div class="t ddr" style="left:949px;top:367px">15,000</div>
<div class="t ddr" style="left:1030.5px;top:367px">VESBOS</div>
<div class="t ddr" style="left:1165px;top:367px">USD</div>
<div class="t ddr" style="left:1234px;top:367px">PIRAEUS</div>
<div class="t ddr" style="left:1367.5px;top:367px">ALEXANDRIA (E…</div>
<div class="t ddr" style="left:1636px;top:367px">0</div>
<div style="position:absolute;left:1024px;top:298px;width:123px;height:65px;background:#ecf759;mix-blend-mode:multiply"></div>
<div style="position:absolute;left:584px;top:254.5px;width:76px;height:25px;border:3px solid #f4444a;filter:drop-shadow(0 2.5px 2px rgba(0,0,0,.42))"></div>
<div class="t dl" style="right:1266px;top:263px">Counterparty</div>
<svg style="position:absolute;left:520px;top:292px;filter:drop-shadow(0 3px 2px rgba(0,0,0,.3))" width="142" height="46" viewBox="0 0 142 46"><path d="M0 18H108V8L138 22.5L108 37V27.5H0Z" fill="#f94245"/></svg>
<div class="bdg" style="left:551px;top:223px">1<i style="left:11px;width:8.3px"></i><i style="left:23.6px;width:6px"></i></div>
<div class="bdg" style="left:501px;top:280px">2</div>
</div><!--OVL_END-->

</div>
</body>
</html>
